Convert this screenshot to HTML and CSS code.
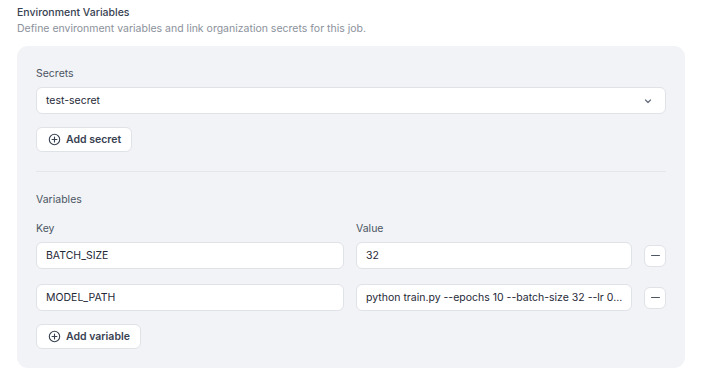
FILE: index.html
```html
<!DOCTYPE html>
<html>
<head>
<meta charset="utf-8">
<link rel="stylesheet" href="styles.css">
</head>
<body>
<div class="section">
  <div class="title">Environment Variables</div>
  <div class="subtitle">Define environment variables and link organization secrets for this job.</div>
  <div class="panel">
    <div class="label">Secrets</div>
    <div class="select">
      <span>test-secret</span>
      <svg class="chev" width="10" height="10" viewBox="0 0 10 10"><path d="M2.5 4 L5 6.5 L7.5 4" fill="none" stroke="#6b7280" stroke-width="1.3" stroke-linecap="round" stroke-linejoin="round"/></svg>
    </div>
    <button class="btn btn-secret">
      <svg width="13" height="13" viewBox="0 0 14 14"><circle cx="7" cy="7" r="5.6" fill="none" stroke="#374151" stroke-width="1.2"/><path d="M7 4.4v5.2M4.4 7h5.2" stroke="#374151" stroke-width="1.2" stroke-linecap="round"/></svg>
      <span>Add secret</span>
    </button>
    <div class="divider"></div>
    <div class="label label-vars">Variables</div>
    <div class="grid">
      <div class="label">Key</div>
      <div class="label">Value</div>
      <div></div>
      <div class="input">BATCH_SIZE</div>
      <div class="input">32</div>
      <button class="minus"><span class="bar"></span></button>
      <div class="input row2">MODEL_PATH</div>
      <div class="input row2">python train.py --epochs 10 --batch-size 32 --lr 0...</div>
      <button class="minus row2"><span class="bar"></span></button>
    </div>
    <button class="btn btn-var">
      <svg width="13" height="13" viewBox="0 0 14 14"><circle cx="7" cy="7" r="5.6" fill="none" stroke="#374151" stroke-width="1.2"/><path d="M7 4.4v5.2M4.4 7h5.2" stroke="#374151" stroke-width="1.2" stroke-linecap="round"/></svg>
      <span>Add variable</span>
    </button>
  </div>
</div>
</body>
</html>
```

FILE: styles.css
```css
* { box-sizing: border-box; }
html, body { margin: 0; background: #ffffff; }
body {
  font-family: Inter, "Noto Sans", sans-serif;
  font-size: 10.5px;
  color: #1f2937;
  padding: 5px 16px 0 17px;
}
.section { width: 668px; display: flex; flex-direction: column; }
.title { line-height: 16px; font-weight: 500; color: #374151; }
.subtitle { line-height: 16px; color: #8b919b; }
.panel {
  margin-top: 9px;
  background: #f2f3f6;
  border-radius: 11px;
  padding: 20px 19px 19px 19px;
  display: flex;
  flex-direction: column;
  align-items: flex-start;
}
.label { line-height: 16px; color: #4b5563; }
.select {
  margin-top: 5px;
  width: 100%;
  height: 27px;
  background: #fff;
  border: 1px solid #dfe2e7;
  border-radius: 6px;
  display: flex;
  align-items: center;
  justify-content: space-between;
  padding: 0 12px 0 9px;
  color: #1f2937;
}
.chev { display: block; }
.btn {
  height: 25px;
  background: #fff;
  border: 1px solid #dfe2e7;
  border-radius: 6px;
  display: flex;
  align-items: center;
  gap: 5px;
  padding: 0 10px 0 11px;
  font-family: Inter, "Noto Sans", sans-serif;
  font-size: 10.5px;
  font-weight: 600;
  color: #374151;
}
.btn svg { display: block; }
.btn-secret { margin-top: 13px; }
.divider { margin-top: 19px; width: 100%; height: 1px; background: #e4e6ea; }
.label-vars { margin-top: 20px; }
.grid {
  margin-top: 13px;
  width: 100%;
  display: grid;
  grid-template-columns: 1fr 276px 22px;
  column-gap: 12px;
  row-gap: 5px;
  align-items: center;
}
.input {
  height: 27px;
  background: #fff;
  border: 1px solid #dfe2e7;
  border-radius: 6px;
  display: flex;
  align-items: center;
  padding: 0 9px;
  color: #1f2937;
  min-width: 0;
  white-space: nowrap;
}
.row2 { margin-top: 10px; }
.minus {
  width: 22px;
  height: 22px;
  padding: 0;
  background: #fff;
  border: 1px solid #dfe2e7;
  border-radius: 6px;
  display: flex;
  align-items: center;
  justify-content: center;
}
.bar { width: 9px; height: 1.5px; background: #4b5563; border-radius: 1px; display: block; }
.btn-var { margin-top: 13px; }
```
